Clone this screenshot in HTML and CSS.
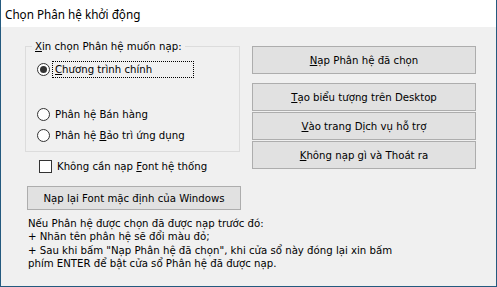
FILE: index.html
```html
<!DOCTYPE html>
<html lang="vi">
<head>
    <meta charset="UTF-8">
    <title>Chọn Phân hệ khởi động</title>
    <link rel="stylesheet" href="styles.css">
</head>
<body>
    <div class="window">
        <div class="titlebar">Chọn Phân hệ khởi động</div>
        <div class="client">
            <div class="left-col">
                <fieldset class="group">
                    <legend><u>X</u>in chọn Phân hệ muốn nạp:</legend>
                    <div class="option">
                        <span class="radio checked"></span>
                        <span class="label focus"><u>C</u>hương trình chính</span>
                    </div>
                    <div class="option-gap"></div>
                    <div class="option">
                        <span class="radio"></span>
                        <span class="label">Phân hệ Bán hàng</span>
                    </div>
                    <div class="option">
                        <span class="radio"></span>
                        <span class="label">Phân hệ <u>B</u>ảo trì ứng dụng</span>
                    </div>
                </fieldset>
                <div class="check-row">
                    <span class="checkbox"></span>
                    <span class="label">Không cần nạp <u>F</u>ont hệ thống</span>
                </div>
                <div class="btn btn-font">Nạp lại Font mặc định của Windows</div>
                <div class="note">
                    Nếu Phân hệ được chọn đã được nạp trước đó:<br>
                    + Nhãn tên phân hệ sẽ đổi màu đỏ;<br>
                    + Sau khi bấm "Nạp Phân hệ đã chọn", khi cửa sổ này đóng lại xin bấm<br>
                    phím ENTER để bật cửa sổ Phân hệ đã được nạp.
                </div>
            </div>
            <div class="right-col">
                <div class="btn btn-main"><u>N</u>ạp Phân hệ đã chọn</div>
                <div class="btn-stack">
                    <div class="btn"><u>T</u>ạo biểu tượng trên Desktop</div>
                    <div class="btn"><u>V</u>ào trang Dịch vụ hỗ trợ</div>
                    <div class="btn"><u>K</u>hông nạp gì và Thoát ra</div>
                </div>
            </div>
        </div>
    </div>
</body>
</html>
```

FILE: styles.css
```css
body {
    margin: 0;
    font-family: "DejaVu Sans Condensed", "DejaVu Sans", sans-serif;
    font-size: 11.3px;
    color: #000;
}
.window {
    width: 495px;
    height: 286px;
    border: 1px solid #245a7f;
    border-top: none;
    background-color: #f0f0f0;
    display: flex;
    flex-direction: column;
}
.titlebar {
    height: 27px;
    line-height: 28px;
    padding-left: 4px;
    background-color: #fff;
    font-family: "Noto Sans", sans-serif;
    font-size: 11.7px;
}
.client {
    display: flex;
    gap: 12px;
    padding: 13px 0 0 24px;
}
.left-col {
    width: 215px;
}
.group {
    margin: 0;
    padding: 6px 0 3px 6px;
    height: 101px;
    border: 1px solid #dcdcdc;
}
.group legend {
    padding: 0 3px;
    line-height: 13px;
}
.option {
    display: flex;
    align-items: center;
    height: 21px;
    margin-left: 5px;
}
.option-gap {
    height: 24px;
}
.radio {
    width: 11px;
    height: 11px;
    border: 1px solid #333;
    border-radius: 50%;
    background-color: #fff;
    position: relative;
}
.radio.checked::after {
    content: "";
    position: absolute;
    top: 2px;
    left: 2px;
    width: 7px;
    height: 7px;
    border-radius: 50%;
    background-color: #333;
}
.label {
    margin-left: 2px;
    padding: 1px 2px;
    border: 1px dotted transparent;
    line-height: 13px;
}
.label.focus {
    width: 136px;
    border-color: #000;
}
.check-row {
    display: flex;
    align-items: center;
    height: 20px;
    margin: 4px 0 0 14px;
}
.checkbox {
    width: 11px;
    height: 11px;
    border: 1px solid #333;
    background-color: #fff;
}
.btn {
    box-sizing: border-box;
    height: 28px;
    border: 1px solid #adadad;
    background-color: #e1e1e1;
    display: flex;
    align-items: center;
    justify-content: center;
}
.btn-font {
    height: 24px;
    width: 214px;
    margin: 10px 0 0 2px;
}
.note {
    margin: 7px 0 0 3px;
    line-height: 13.3px;
    white-space: nowrap;
}
.right-col {
    width: 224px;
    padding-top: 6px;
}
.btn-stack {
    margin-top: 9px;
    display: flex;
    flex-direction: column;
    gap: 1px;
}
```
